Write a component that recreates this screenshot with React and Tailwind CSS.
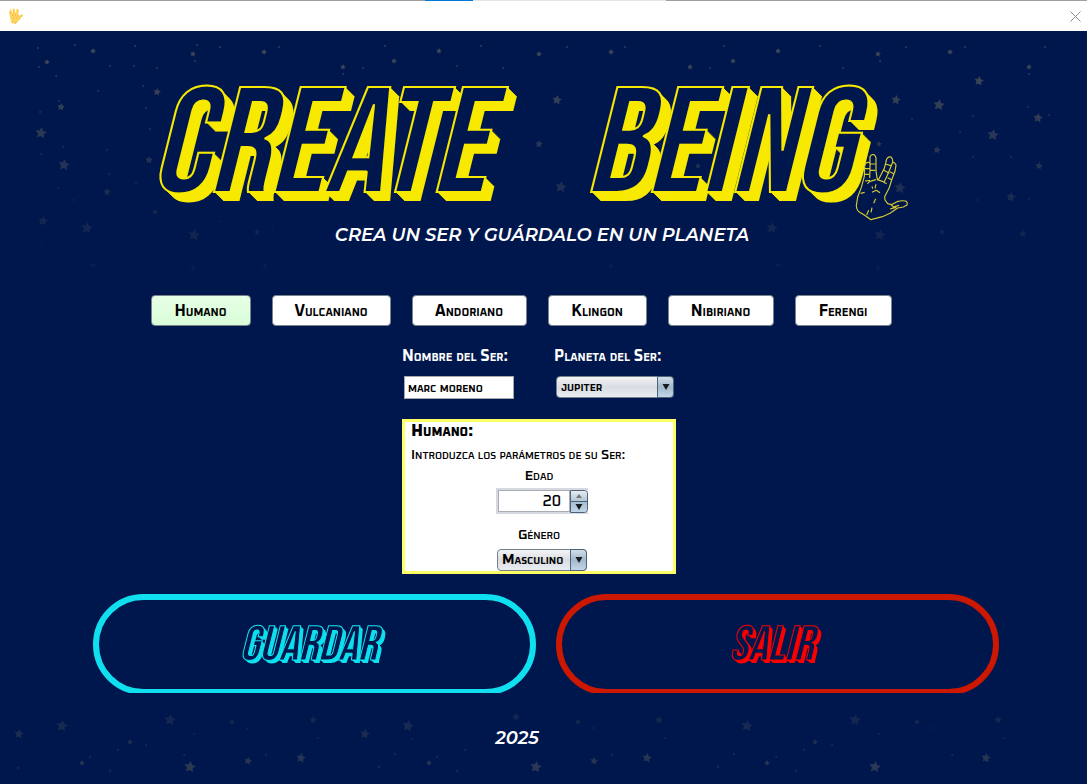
import React from "react";

const HEADER_STARS = [
  [38, 48, 1], [93, 51, 3], [47, 62, 3], [193, 54, 3], [264, 52, 3], [343, 67, 3], [394, 61, 3], [439, 51, 3],
  [539, 54, 3], [611, 52, 3], [690, 67, 3], [733, 61, 3], [778, 51, 3], [878, 54, 3], [950, 52, 3], [1029, 67, 3],
  [75, 45, 1], [135, 46, 1], [197, 45, 1], [220, 47, 1], [279, 47, 1], [385, 46, 1], [481, 46, 1], [567, 47, 1],
  [625, 47, 1], [724, 46, 1], [820, 46, 1], [906, 47, 1], [965, 47, 1], [1045, 47, 1], [39, 67, 1], [56, 76, 1],
  [110, 66, 1], [134, 66, 1], [157, 68, 1], [195, 61, 1], [343, 74, 1], [363, 68, 1], [457, 66, 1], [503, 68, 1],
  [710, 68, 1], [843, 68, 1], [880, 61, 1], [1029, 74, 1], [98, 91, 1], [143, 86, 1], [59, 101, 1], [40, 112, 1],
  [146, 108, 1], [150, 129, 1], [63, 147, 1], [107, 150, 1], [41, 154, 1], [109, 174, 1], [58, 188, 1],
  [74, 200, 1], [136, 183, 1], [912, 119, 1], [960, 132, 1], [973, 116, 1], [1028, 107, 1], [1049, 115, 1],
  [973, 157, 1], [1011, 157, 1], [977, 200, 1], [1029, 199, 1], [219, 221, 1], [272, 226, 1], [42, 243, 1],
  [157, 92, 4], [61, 107, 4], [41, 133, 6], [64, 165, 6], [107, 192, 4], [149, 160, 4], [155, 212, 3],
  [43, 221, 5], [87, 228, 6], [194, 235, 6], [257, 232, 3], [93, 265, 3], [193, 268, 3], [265, 266, 3],
  [539, 144, 4], [557, 100, 5], [896, 100, 5], [979, 81, 5], [939, 105, 6], [1038, 118, 5], [993, 135, 6],
  [937, 150, 4], [879, 144, 3], [1039, 166, 4], [900, 188, 6], [1011, 197, 5], [561, 187, 6], [698, 166, 3],
  [772, 228, 6], [880, 235, 6], [942, 232, 3], [1023, 234, 4], [611, 266, 3], [778, 265, 3], [878, 268, 3],
];

const FOOTER_STARS = [
  [170, 720, 6], [232, 722, 3], [313, 720, 4], [365, 734, 5], [408, 726, 6], [130, 742, 3], [82, 763, 3],
  [190, 767, 6], [248, 761, 4], [301, 758, 5], [429, 763, 3], [536, 767, 6], [594, 761, 4], [647, 758, 5],
  [578, 722, 3], [659, 720, 4], [747, 726, 6], [855, 720, 6], [917, 722, 3], [998, 720, 4], [815, 742, 3],
  [767, 763, 3], [875, 767, 6], [986, 758, 5], [516, 717, 4], [19, 734, 5], [62, 726, 6], [18, 768, 1],
  [118, 750, 1], [146, 745, 1], [90, 757, 1], [110, 771, 1], [184, 755, 1], [194, 734, 1], [247, 729, 1],
  [266, 755, 1], [318, 738, 1], [379, 767, 1], [395, 754, 1], [412, 739, 1], [437, 757, 1], [465, 750, 1],
  [457, 771, 1], [593, 728, 1], [612, 755, 1], [665, 738, 1], [718, 767, 1], [734, 754, 1], [776, 757, 1],
  [804, 750, 1], [832, 745, 1], [879, 734, 1], [796, 771, 1], [933, 728, 1], [952, 755, 1], [1004, 738, 1],
];

function starPoints(cx, cy, r) {
  return Array.from({ length: 10 }, (_, i) => {
    const a = -Math.PI / 2 + 0.15 + (i * Math.PI) / 5;
    const d = i % 2 ? r * 0.5 : r;
    return `${(cx + Math.cos(a) * d).toFixed(1)},${(cy + Math.sin(a) * d).toFixed(1)}`;
  }).join(" ");
}

function Star({ x, y, r, opacity }) {
  return <polygon points={starPoints(x, y, r === 1 ? 1.3 : r)} fill="#777461" opacity={opacity} />;
}

function Starfield() {
  return (
    <svg aria-hidden="true" className="pointer-events-none absolute inset-x-0 top-0 w-full" viewBox="0 0 1087 784">
      {HEADER_STARS.map(([x, y, r], i) => (
        <Star key={i} x={x} y={y} r={r} opacity={Math.max(0.08, 0.64 - y / 480)} />
      ))}
      {FOOTER_STARS.map(([x, y, r], i) => (
        <Star key={i} x={x} y={y} r={r} opacity={Math.min(0.36, 0.16 + (y - 715) / 260)} />
      ))}
    </svg>
  );
}

function VulcanHand() {
  return (
    <svg aria-hidden="true" className="absolute -right-[57px] top-[69px] h-[68px] w-[54px]" viewBox="46 42 162 204" fill="none" stroke="#d6ca32" strokeWidth="3.500" strokeLinejoin="round">
      <path d="M50 197 54 171 65 142 74 109 75 78Q78 66 86 67L91 69 91 50Q95 42 103 44 109 48 109 54L109 93 113 119 118 116 134 85 141 57Q146 49 154 51 160 56 159 67 165 66 169 75L166 94 157 117 148 145 135 170 136 180 144 191 155 194 172 185Q185 181 198 183 205 187 202 195L191 201 174 204 151 220 128 230 94 239 75 226 60 217Q51 211 50 197Z" />
      <path d="M91 69 91 90 90 114M74 86H90M74 103H88M92 72H108M92 91H107M76 123 91 121M136 72 154 77M130 89 149 100M159 67 153 82 143 106 132 129M151 95 163 102M144 113 156 119M109 119 91 124 83 131M113 119 128 124 141 131M109 133 106 145M97 139 99 146M97 157 110 151 121 158M63 160 75 157M108 176 102 190M97 203 94 217M87 211 81 225M155 194 160 201 178 196M151 207 170 202" />
    </svg>
  );
}

function AppIcon() {
  return (
    <svg role="img" aria-label="Create Being" className="h-4 w-4" viewBox="0 0 16 16">
      <path d="M2 3Q1 1 3 1.500L4.500 5 5 5.500 4.500 1.500Q6-.5 7 1.500L7.500 5 8 5 8.500 1.500Q9.500-.5 10.500 1.500L10.500 8 12.500 7Q15 5.500 15 7.500L11 12 9 15Q5 17 3 14L2 9 1 4Z" fill="#ffd45c" />
      <path d="M2 5h1M5 4h1M9 3h1M4 7h1M7 7h1M10 8h1M5 10h1M8 10h1M13 8h1M11 11h1M4 14h1M7 15h1" stroke="#eda23c" />
    </svg>
  );
}

const RACES = [
  ["Humano", "w-[100px]"],
  ["Vulcaniano", "w-[119px]"],
  ["Andoriano", "w-[115px]"],
  ["Klingon", "w-[99px]"],
  ["Nibiriano", "w-[106px]"],
  ["Ferengi", "w-[97px]"],
];

const DISPLAY = "font-['Bebas_Neue','Open_Sans_Condensed','Liberation_Sans',sans-serif] font-normal italic text-[#00174d]";

function Arrow({ up = false, muted = false }) {
  return (
    <svg aria-hidden="true" className="h-[6px] w-2" viewBox="0 0 8 6">
      <path d={up ? "M1 5 4 1 7 5Z" : "M.500 0 7.500 0 4 6Z"} fill={muted ? "#777" : "#181c20"} />
    </svg>
  );
}

function Dropdown({ id, options, width }) {
  return (
    <div className={`relative h-[22px] ${width}`}>
      <select id={id} className="block h-full w-full appearance-none rounded border border-[#75808c] bg-linear-to-b from-[#f3f4f6] via-[#d9dce2] to-[#e9edf2] pr-4 pl-1 text-[14px] leading-5 font-bold text-black [font-variant:small-caps]">
        {options.map((o) => <option key={o}>{o}</option>)}
      </select>
      <span className="pointer-events-none absolute inset-y-0 right-0 flex w-[17px] items-center justify-center rounded-r border border-[#4c6379] bg-linear-to-b from-[#d3dfe9] via-[#a3b8ca] to-[#c2d7e9]">
        <Arrow />
      </span>
    </div>
  );
}

export default function App() {
  return (
    <div className="relative flex min-h-screen flex-col bg-[#00174d] font-[Oxanium,Orbitron,Inter,sans-serif] text-white">
      <header className="flex h-[31px] flex-col bg-white">
        <div className="flex h-px bg-[#a0a0a0]">
          <span className="ml-[39.1%] w-[4.4%] bg-[#0078d7]" />
          <span className="w-[17.8%] bg-[#e6e6e6]" />
        </div>
        <div className="flex flex-1 items-center justify-between pr-[6px] pl-2">
          <AppIcon />
          <button aria-label="Cerrar" className="flex h-3 w-3 items-center justify-center">
            <svg className="h-[11px] w-[11px]" viewBox="0 0 11 11"><path d="M.500.500 10.500 10.500M10.500.500.500 10.500" stroke="#8b8b8b" /></svg>
          </button>
        </div>
      </header>
      <Starfield />
      <main className="relative flex flex-1 flex-col items-center">
        <h1 className={`relative mt-[54px] mr-[85px] flex h-[120px] items-center gap-[100px] pt-1 text-[150px] leading-[120px] ${DISPLAY} [-webkit-text-stroke:2px_#f7e900] [text-shadow:1px_1px_#f7e900,2px_2px_#f7e900,3px_3px_#f7e900,4px_4px_#f7e900,5px_5px_#f7e900,6px_6px_#f7e900,7px_7px_#f7e900,8px_8px_#f7e900,9px_9px_#f7e900]`}>
          <span>CREATE</span>
          <span>BEING</span>
          <VulcanHand />
        </h1>
        <p className="mt-[16px] mr-[3px] font-[Montserrat,Inter,sans-serif] text-[18px] leading-7 font-semibold italic">CREA UN SER Y GUÁRDALO EN UN PLANETA</p>

        <div className="mt-[46px] mr-[45px] flex gap-[21px]">
          {RACES.map(([name, width], i) => (
            <button key={name} className={`h-[31px] rounded border border-[#7a828c] text-[16px] leading-5 font-bold text-black [font-variant:small-caps] ${width} ${i === 0 ? "bg-linear-to-b from-[#e6ffe6] to-[#d9fdd9]" : "bg-white"}`}>
              {name}
            </button>
          ))}
        </div>

        <form className="mt-5 mr-[9px] flex w-[274px] flex-col" onSubmit={(e) => e.preventDefault()}>
          <div className="grid grid-cols-[152px_1fr] text-[16px] leading-5 font-bold [font-variant:small-caps]">
            <label htmlFor="name" className="whitespace-nowrap">Nombre del Ser:</label>
            <label htmlFor="planet" className="whitespace-nowrap">Planeta del Ser:</label>
          </div>
          <div className="mt-[10px] grid grid-cols-[152px_1fr] pl-[2px]">
            <input id="name" defaultValue="marc moreno" className="h-[23px] w-[110px] border border-[#a4a8ac] bg-white px-[3px] text-[14px] leading-5 font-bold text-black [font-variant:small-caps]" />
            <Dropdown id="planet" options={["jupiter"]} width="w-[118px]" />
          </div>

          <section className="mt-5 flex flex-col border-[3px] border-[#ffff66] bg-white text-[14px] leading-4 font-semibold text-black [font-variant:small-caps]">
            <h2 className="pt-[2px] pl-[6px] text-[17px] font-extrabold">Humano:</h2>
            <p className="mt-[7px] pl-[6px] whitespace-nowrap">Introduzca los parámetros de su Ser:</p>
            <div className="flex flex-col items-center">
              <label htmlFor="age" className="mt-[5px]">Edad</label>
              <div className="mt-[4px] ml-[6px] flex h-[26px] w-[92px] items-center bg-[#d6d9df] p-[2px] pr-0">
                <input id="age" inputMode="numeric" defaultValue="20" className="h-[22px] w-[72px] border border-[#a9adb3] bg-white pr-2 text-right text-[16px] font-medium" />
                <div className="flex h-[23px] w-[18px] flex-col overflow-hidden rounded-r border border-[#4c6379]">
                  <button type="button" aria-label="Aumentar" className="flex flex-1 items-center justify-center border-b border-[#4c6379] bg-linear-to-b from-[#e6edf3] to-[#b4c5d3]"><Arrow up muted /></button>
                  <button type="button" aria-label="Reducir" className="flex flex-1 items-center justify-center bg-linear-to-b from-[#a8bdd0] to-[#c0d6e8]"><Arrow /></button>
                </div>
              </div>
              <label htmlFor="gender" className="mt-[13px] mb-[6px]">Género</label>
              <div className="ml-[6px]"><Dropdown id="gender" options={["Masculino"]} width="w-[90px]" /></div>
            </div>
          </section>
        </form>

        <div className="mt-5 ml-[5px] flex h-[99px] w-5/6 gap-5 overflow-hidden">
          <button className={`h-[101px] flex-1 rounded-full border-[6px] border-[#0fdfee] pt-[2px] pr-3 text-[49px] leading-10 ${DISPLAY} [-webkit-text-stroke:1px_#0fdfee] [text-shadow:1px_1px_#0fdfee,2px_2px_#0fdfee,3px_3px_#0fdfee]`}>GUARDAR</button>
          <button className={`h-[101px] flex-1 rounded-full border-[6px] border-[#cc1800] pt-[2px] pr-3 text-[49px] leading-10 ${DISPLAY} [-webkit-text-stroke:1px_#fa0000] [text-shadow:1px_1px_#fa0000,2px_2px_#fa0000,3px_3px_#fa0000]`}>SALIR</button>
        </div>
        <footer className="mt-[31px] mr-[53px] font-[Montserrat,Inter,sans-serif] text-[18px] leading-7 font-semibold italic">2025</footer>
      </main>
    </div>
  );
}
